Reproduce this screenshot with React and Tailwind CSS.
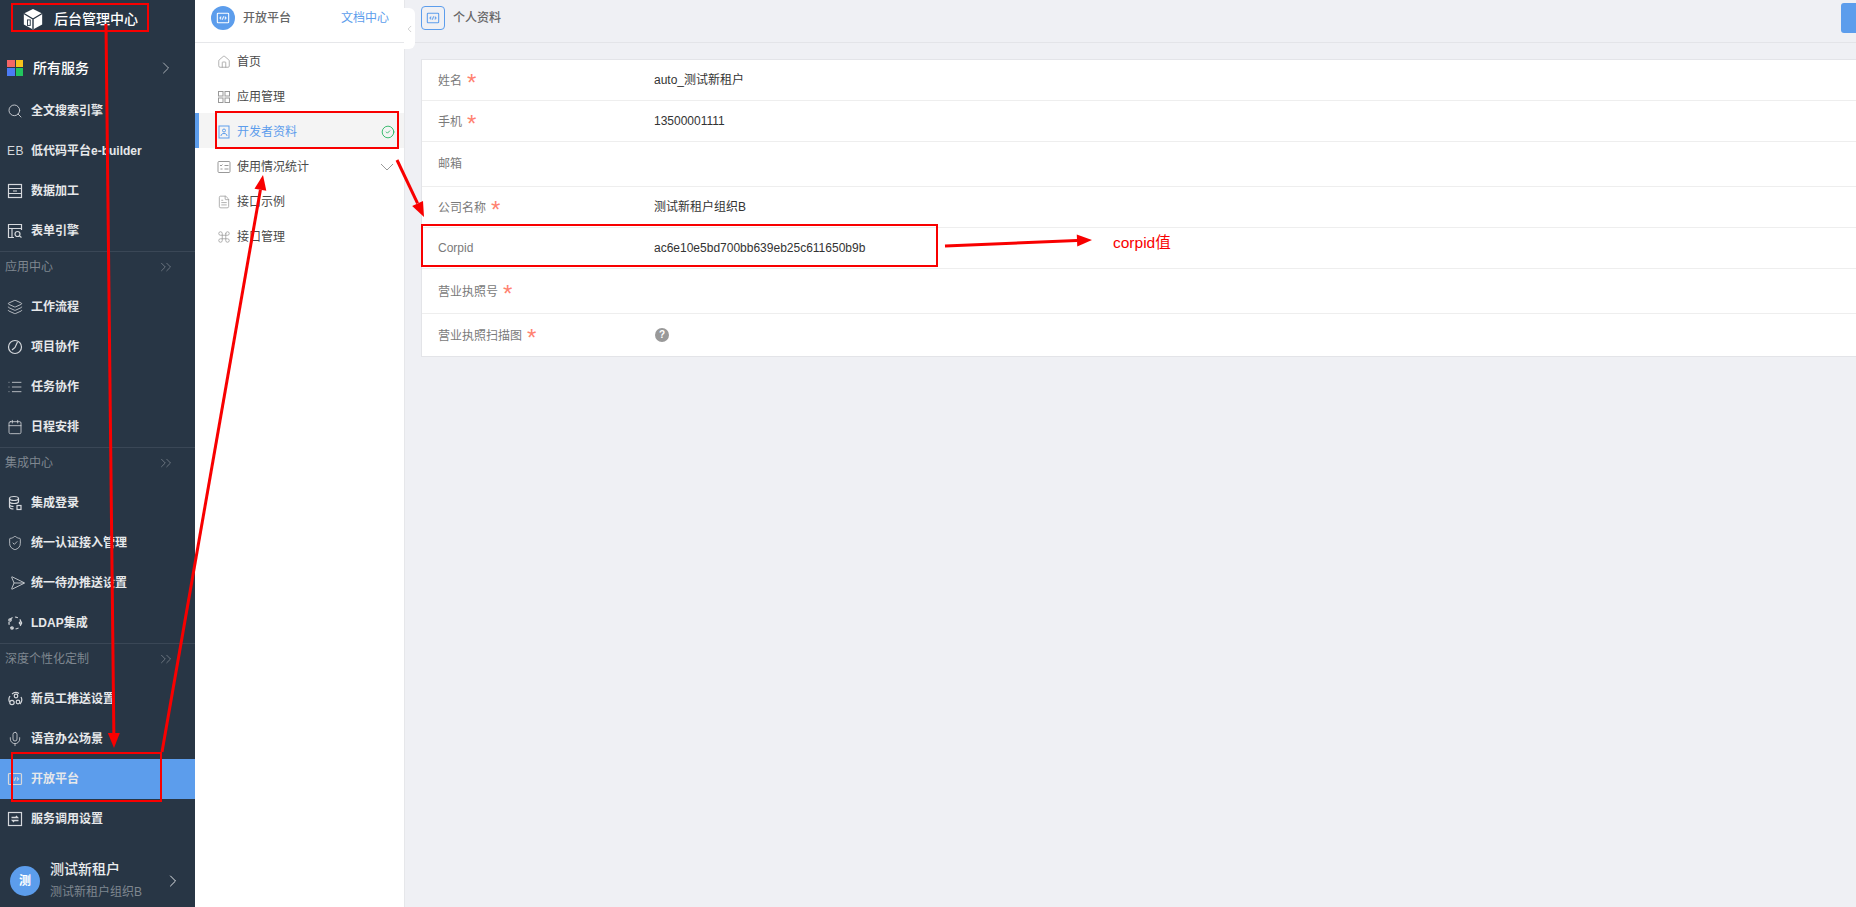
import React from "react";
import { Search, Layers, List, Calendar, ShieldCheck, Send, Mic, ChevronRight, ChevronLeft, ChevronsRight, House, Command, FileText, CircleCheck } from "lucide-react";

const FONT = "font-['Liberation_Sans','Noto_Sans_CJK_SC',sans-serif]";

const Svg = ({ children, className = "w-4 h-4" }) => (
  <svg viewBox="0 0 16 16" fill="none" stroke="currentColor" strokeWidth="1.200" className={className}>{children}</svg>
);

const CodeIcon = ({ className }) => (
  <Svg className={className}>
    <rect x="1.500" y="2.500" width="13" height="11" rx="1" />
    <path d="M6 6.500 4.500 8 6 9.500M10 6.500 11.500 8 10 9.500M8.700 6.200 7.300 9.800" />
  </Svg>
);
const TableIcon = () => (
  <Svg><rect x="1.500" y="1.500" width="13" height="13" /><path d="M1.500 5.500h13M1.500 10.500h13M6 8h4" /></Svg>
);
const FormIcon = () => (
  <Svg><path d="M14.500 7V1.500h-13v13H7M1.500 5.500h13M5 5.500v9" /><circle cx="10.500" cy="11" r="2.500" /><path d="m12.500 13 2 1.500" /></Svg>
);
const DialIcon = () => (
  <Svg><circle cx="8" cy="8" r="6.500" /><path d="M10.500 3 8 8.500l-3 2.500" /></Svg>
);
const DbIcon = () => (
  <Svg><ellipse cx="7" cy="3.500" rx="4.500" ry="2" /><path d="M2.500 3.500v3c0 1 2 2 4.500 2s4.500-1 4.500-2v-3M2.500 6.500v3c0 1 2 2 4 2M2.500 9.500v2.500c0 1 2 2 4 2" /><rect x="10" y="10.500" width="4" height="4" /></Svg>
);
const OrbitIcon = () => (
  <Svg><circle cx="8" cy="8" r="6" strokeDasharray="3 2.500" /><circle cx="3" cy="5" r="1.200" /><circle cx="13.500" cy="8" r="1.200" /><circle cx="5" cy="13" r="1.200" /></Svg>
);
const PeopleIcon = () => (
  <Svg><path d="M5 3a6 6 0 0 1 7-.5M14 6a6 6 0 0 1-1 7M3 5a6 6 0 0 0-.5 6" /><circle cx="9" cy="5" r="1.800" /><circle cx="5" cy="11.500" r="2.200" /><circle cx="11" cy="11" r="1.800" /></Svg>
);
const SwapIcon = () => (
  <Svg><rect x="1.500" y="1.500" width="13" height="13" /><path d="M4.500 6.500h6l-1.500-1.500M11.500 9.500h-6l1.500 1.500" strokeWidth="1.300" /></Svg>
);

const Row = ({ icon, label, active }) => (
  <div className={`h-10 flex items-center pl-[7px] text-xs font-semibold text-[#e6e8ea] ${active ? "bg-[#5c9dec]" : ""}`}>
    <span className="w-6 flex items-center text-[#d5d8dc] font-normal">{icon}</span>
    <span className="whitespace-nowrap">{label}</span>
  </div>
);

const Section = ({ label }) => (
  <div className="h-9 border-t border-[#3a4756] flex items-start pt-[7px] justify-between pl-[5px] pr-5 text-xs text-[#7f8790]">
    <span>{label}</span>
    <ChevronsRight className="w-[18px] h-[18px] mt-[-1px]" strokeWidth={1} />
  </div>
);

const Sidebar = () => (
  <aside className="w-[195px] shrink-0 h-full bg-[#283645] flex flex-col relative">
    <div className="h-[46px] flex items-start pt-[7px] pl-[22px] gap-[10px] text-white">
      <svg viewBox="0 0 24 24" className="w-[22px] h-[24px]" fill="#fff">
        <path d="M12 1 22 6v12l-10 5.500L2 18V6z" />
        <path d="M12 12 22 6M12 12 2 6M12 12v11" stroke="#283645" strokeWidth="1.500" fill="none" />
        <rect x="6" y="13" width="3" height="6" fill="none" stroke="#283645" strokeWidth="1" />
      </svg>
      <span className="text-sm font-medium leading-[24px] whitespace-nowrap">后台管理中心</span>
    </div>
    <div className="h-[45px] flex items-center pl-[7px] pr-[19px] pb-[2px] text-white">
      <div className="grid grid-cols-2 gap-px w-4 h-4 mr-[10px] shrink-0">
        <span className="bg-[#f56565]" /><span className="bg-[#f6c21c]" />
        <span className="bg-[#4b7bf5]" /><span className="bg-[#22c55e]" />
      </div>
      <span className="text-sm font-medium flex-1 whitespace-nowrap">所有服务</span>
      <ChevronRight className="w-5 h-5 text-[#c3c8cd]" strokeWidth={1} />
    </div>
    <Row icon={<Search className="w-4 h-4" strokeWidth={1.300} />} label="全文搜索引擎" />
    <Row icon={<span className="text-xs tracking-[0.5px]">EB</span>} label="低代码平台e-builder" />
    <Row icon={<TableIcon />} label="数据加工" />
    <Row icon={<FormIcon />} label="表单引擎" />
    <Section label="应用中心" />
    <Row icon={<Layers className="w-4 h-4" strokeWidth={1.200} />} label="工作流程" />
    <Row icon={<DialIcon />} label="项目协作" />
    <Row icon={<List className="w-4 h-4" strokeWidth={1.200} />} label="任务协作" />
    <Row icon={<Calendar className="w-4 h-4" strokeWidth={1.200} />} label="日程安排" />
    <Section label="集成中心" />
    <Row icon={<DbIcon />} label="集成登录" />
    <Row icon={<ShieldCheck className="w-4 h-4" strokeWidth={1.200} />} label="统一认证接入管理" />
    <Row icon={<Send className="w-4 h-4 rotate-45" strokeWidth={1.200} />} label="统一待办推送设置" />
    <Row icon={<OrbitIcon />} label="LDAP集成" />
    <Section label="深度个性化定制" />
    <Row icon={<PeopleIcon />} label="新员工推送设置" />
    <Row icon={<Mic className="w-4 h-4" strokeWidth={1.200} />} label="语音办公场景" />
    <Row icon={<CodeIcon />} label="开放平台" active />
    <Row icon={<SwapIcon />} label="服务调用设置" />
    <div className="flex items-center pl-[10px] pr-3 h-[68px] pt-[16px]">
      <div className="w-[30px] h-[30px] rounded-full bg-[#5c9dec] text-white text-xs font-bold flex items-center justify-center shrink-0">测</div>
      <div className="flex-1 ml-[10px] flex flex-col gap-2 -translate-y-px">
        <span className="text-sm leading-[16px] font-medium text-[#eceef0] whitespace-nowrap">测试新租户</span>
        <span className="text-xs leading-[14px] text-[#7f8790] whitespace-nowrap">测试新租户组织B</span>
      </div>
      <ChevronRight className="w-5 h-5 text-[#e0e3e6]" strokeWidth={1.200} />
    </div>
    <div className="absolute left-full top-[833px] w-[13px] h-[35px] bg-[#a3c6f4] rounded-r-md flex items-center justify-center text-white">
      <ChevronLeft className="w-3 h-3" strokeWidth={1.500} />
    </div>
  </aside>
);

const GrayIcon = ({ children }) => <span className="w-[14px] mr-[6px] flex items-center text-[#999]">{children}</span>;

const SubItem = ({ icon, label, active, right }) => (
  <div className={`h-[35px] flex items-center pl-[22px] pr-[9px] pt-[2px] text-xs relative ${active ? "bg-[#f4f4f4] text-[#5c9dec]" : "text-[#4a4a4a]"}`}>
    {active && <span className="absolute left-0 top-0 bottom-0 w-1 bg-[#5c9dec]" />}
    <GrayIcon>{icon}</GrayIcon>
    <span className="flex-1 whitespace-nowrap">{label}</span>
    {right}
  </div>
);

const SubNav = () => (
  <div className="w-[210px] shrink-0 h-full bg-white border-r border-[#e6e7ea] relative">
    <div className="h-[43px] border-b border-[#e6e7ea] flex items-start pt-[6px] pl-4 pr-[15px]">
      <div className="w-6 h-6 rounded-full bg-[#5c9dec] flex items-center justify-center text-white shrink-0">
        <CodeIcon className="w-[14px] h-[14px]" />
      </div>
      <span className="ml-2 flex-1 text-xs font-medium leading-[24px] text-[#666]">开放平台</span>
      <span className="text-xs leading-[24px] text-[#5c9dec]">文档中心</span>
    </div>
    <SubItem icon={<House className="w-[14px] h-[14px]" strokeWidth={1.300} />} label="首页" />
    <SubItem
      icon={<svg viewBox="0 0 14 14" className="w-[14px] h-[14px]" fill="none" stroke="currentColor"><rect x="1.500" y="1.500" width="4.500" height="4.500" /><rect x="8" y="1.500" width="4.500" height="4.500" /><rect x="1.500" y="8" width="4.500" height="4.500" /><rect x="8" y="8" width="4.500" height="4.500" /></svg>}
      label="应用管理"
    />
    <SubItem
      active
      icon={<svg viewBox="0 0 14 14" className="w-[14px] h-[14px] text-[#5c9dec]" fill="none" stroke="currentColor"><rect x="2" y="1" width="10" height="12" /><circle cx="7" cy="5.500" r="1.500" /><path d="M4 11c0-2 1.500-2.500 3-2.500s3 .5 3 2.500" /></svg>}
      label="开发者资料"
      right={<CircleCheck className="w-[14px] h-[14px] text-[#22b35e]" strokeWidth={1.500} />}
    />
    <SubItem
      icon={<svg viewBox="0 0 14 14" className="w-[14px] h-[14px]" fill="none" stroke="currentColor"><rect x="1" y="1.500" width="12" height="11" rx="1" /><path d="M3 5l1 1 1.500-1.500M7.500 5.500h4M3.500 9h2M7.500 9h4" /></svg>}
      label="使用情况统计"
      right={<svg viewBox="0 0 14 8" className="w-[14px] h-2 mr-px text-[#999]" fill="none" stroke="currentColor"><path d="M1 1l6 6 6-6" /></svg>}
    />
    <SubItem icon={<FileText className="w-[14px] h-[14px]" strokeWidth={1.300} />} label="接口示例" />
    <SubItem icon={<Command className="w-[14px] h-[14px]" strokeWidth={1.300} />} label="接口管理" />
    <div className="absolute left-full top-2 w-[11px] h-[41px] bg-white rounded-r-md flex items-center justify-center text-[#aaa]">
      <ChevronLeft className="w-3 h-3" strokeWidth={1.200} />
    </div>
  </div>
);

const Star = () => <span className="ml-[5px] text-[#ff8270] text-[24px] leading-[12px] translate-y-[6px] inline-block">*</span>;

const FieldRow = ({ h, label, star, value, last }) => (
  <div className={`${h} flex items-center ${last ? "" : "border-b border-[#eeeeee]"}`}>
    <div className="w-[232px] pl-4 text-xs text-[#7a7a7a] whitespace-nowrap">{label}{star && <Star />}</div>
    <div className="text-xs text-[#333]">{value}</div>
  </div>
);

const Main = () => (
  <div className="flex-1 min-w-0 h-full bg-[#eff0f4] flex flex-col">
    <div className="h-[43px] border-b border-[#e3e4e8] flex items-start pt-[6px] pl-4 shrink-0">
      <div className="w-6 h-6 border border-[#5c9dec] rounded-sm flex items-center justify-center text-[#5c9dec]">
        <CodeIcon className="w-[14px] h-[14px]" />
      </div>
      <span className="ml-2 text-xs leading-[24px] font-medium text-[#666] flex-1">个人资料</span>
      <div className="w-[15px] h-[30px] mt-[-3px] bg-[#5c9dec] rounded-l-[3px]" />
    </div>
    <div className="mt-4 ml-4 bg-white border-y border-l border-[#e3e4e8] h-[298px] flex flex-col">
      <FieldRow h="h-[41px]" label="姓名" star value="auto_测试新租户" />
      <FieldRow h="h-[41px]" label="手机" star value="13500001111" />
      <FieldRow h="h-[45px]" label="邮箱" />
      <FieldRow h="h-[41px]" label="公司名称" star value="测试新租户组织B" />
      <FieldRow h="h-[41px]" label="Corpid" value="ac6e10e5bd700bb639eb25c611650b9b" />
      <FieldRow h="h-[45px]" label="营业执照号" star />
      <FieldRow
        h="h-[42px]"
        last
        label="营业执照扫描图"
        star
        value={<span className="w-[14px] h-[14px] ml-px rounded-full bg-[#999] text-white text-[10px] font-bold flex items-center justify-center">?</span>}
      />
    </div>
  </div>
);

const Arrow = ({ x1, y1, x2, y2 }) => {
  const a = Math.atan2(y2 - y1, x2 - x1);
  const L = 15, W = 6;
  const bx = x2 - L * Math.cos(a), by = y2 - L * Math.sin(a);
  const nx = -Math.sin(a) * W, ny = Math.cos(a) * W;
  return (
    <g>
      <line x1={x1} y1={y1} x2={bx} y2={by} stroke="#f80000" strokeWidth="3" />
      <polygon points={`${x2},${y2} ${bx + nx},${by + ny} ${bx - nx},${by - ny}`} fill="#f80000" />
    </g>
  );
};

const Annotations = () => (
  <>
    <svg className="absolute inset-0 w-full h-full pointer-events-none" viewBox="0 0 1856 907">
      <g fill="none" stroke="#f80000" strokeWidth="2">
        <rect x="12" y="4" width="136" height="27" />
        <rect x="216" y="112" width="182" height="36" />
        <rect x="12" y="753" width="149" height="48" />
        <rect x="422" y="225" width="515" height="41" />
      </g>
      <Arrow x1={106} y1={24} x2={114} y2={748} />
      <Arrow x1={162} y1={752} x2={263} y2={175} />
      <Arrow x1={397} y1={160} x2={424} y2={217} />
      <Arrow x1={945} y1={246} x2={1092} y2={240} />
    </svg>
    <span className="absolute left-[1113px] top-[233px] text-[15.5px] leading-5 text-[#f80000] whitespace-nowrap">corpid值</span>
  </>
);

export default function App() {
  return (
    <div className={`relative w-full h-[907px] overflow-hidden flex ${FONT}`}>
      <Sidebar />
      <SubNav />
      <Main />
      <Annotations />
    </div>
  );
}
